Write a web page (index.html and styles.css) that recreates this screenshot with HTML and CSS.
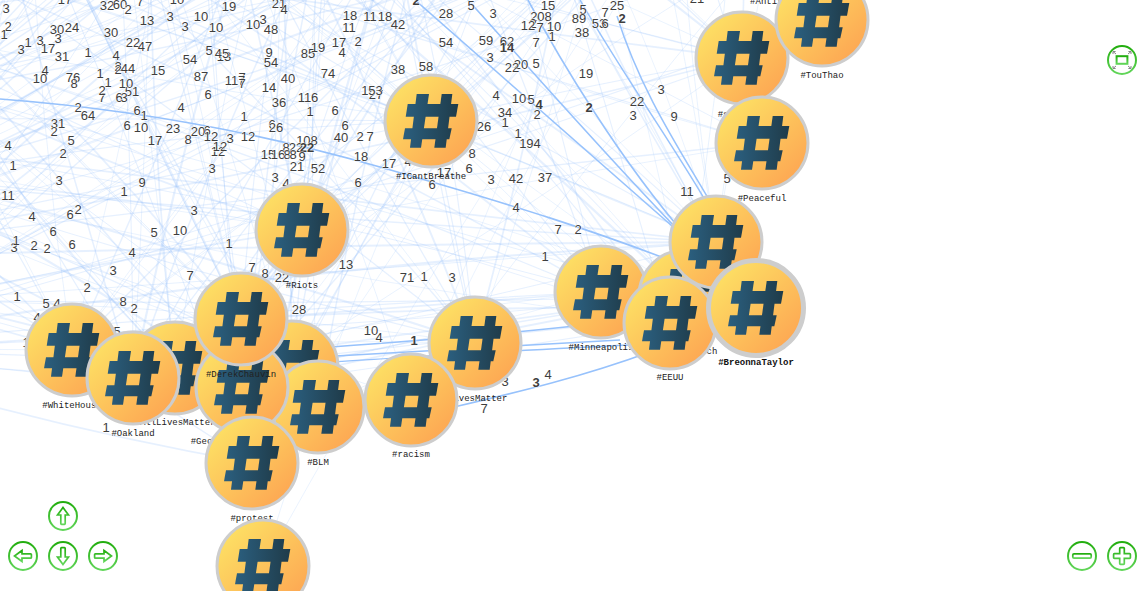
FILE: index.html
```html
<!DOCTYPE html>
<html lang="en">
<head>
<meta charset="utf-8">
<title>Hashtag network</title>
<link rel="stylesheet" href="styles.css">
</head>
<body>
<main class="stage">
  <svg class="graph" id="graph" width="1147" height="591" viewBox="0 0 1147 591" xmlns="http://www.w3.org/2000/svg">
    <defs>
      <linearGradient id="disc" x1="0.12" y1="0.12" x2="0.88" y2="0.88">
        <stop offset="0" stop-color="#fde064"/>
        <stop offset="1" stop-color="#fda753"/>
      </linearGradient>
      <linearGradient id="ink" gradientUnits="userSpaceOnUse" x1="-28" y1="0" x2="28" y2="0">
        <stop offset="0" stop-color="#2b5f7f"/>
        <stop offset="1" stop-color="#1f3b49"/>
      </linearGradient>
      <g id="hash-mark" fill="url(#ink)">
        <path d="M-14.3 -27H-2L-10 26.7H-21Z"/>
        <path d="M10.7 -27H21.3L14.7 26.7H3.3Z"/>
        <path d="M-23.3 -17H27.3L25 -4.3H-25.3Z"/>
        <path d="M-26 7.3H20.7L18.3 18.3H-28Z"/>
      </g>
    </defs>
    <g id="edges"></g>
    <g id="edge-labels"></g>
    <g id="nodes"></g>
  </svg>

  <svg width="0" height="0" class="defs-only" aria-hidden="true">
    <defs>
      <linearGradient id="ctl" x1="0" y1="0" x2="0" y2="1">
        <stop offset="0" stop-color="#22ad0e"/>
        <stop offset="1" stop-color="#62d65a"/>
      </linearGradient>
    </defs>
  </svg>

  <button class="ctl ctl-up" aria-label="Move up">
    <svg viewBox="0 0 30 30"><circle cx="15" cy="15" r="14"/><path d="M15 6.5L20.5 14H17.2V22.6A.8 .8 0 0 1 16.4 23.4H13.6A.8 .8 0 0 1 12.8 22.6V14H9.5Z"/></svg>
  </button>
  <button class="ctl ctl-left" aria-label="Move left">
    <svg viewBox="0 0 30 30"><circle cx="15" cy="15" r="14"/><path d="M6.5 15L14 9.5V12.8H22.6A.8 .8 0 0 1 23.4 13.6V16.4A.8 .8 0 0 1 22.6 17.2H14V20.5Z"/></svg>
  </button>
  <button class="ctl ctl-down" aria-label="Move down">
    <svg viewBox="0 0 30 30"><circle cx="15" cy="15" r="14"/><path d="M15 23.5L20.5 16H17.2V7.4A.8 .8 0 0 0 16.4 6.6H13.6A.8 .8 0 0 0 12.8 7.4V16H9.5Z"/></svg>
  </button>
  <button class="ctl ctl-right" aria-label="Move right">
    <svg viewBox="0 0 30 30"><circle cx="15" cy="15" r="14"/><path d="M23.5 15L16 9.5V12.8H7.4A.8 .8 0 0 0 6.6 13.6V16.4A.8 .8 0 0 0 7.4 17.2H16V20.5Z"/></svg>
  </button>
  <button class="ctl ctl-minus" aria-label="Zoom out">
    <svg viewBox="0 0 30 30"><circle cx="15" cy="15" r="14"/><rect x="5.8" y="12.8" width="18.4" height="4.4" rx="1.2"/></svg>
  </button>
  <button class="ctl ctl-plus" aria-label="Zoom in">
    <svg viewBox="0 0 30 30"><circle cx="15" cy="15" r="14"/><path d="M12.7 7.4A.8 .8 0 0 1 13.5 6.6H16.5A.8 .8 0 0 1 17.3 7.4V12.7H22.6A.8 .8 0 0 1 23.4 13.5V16.5A.8 .8 0 0 1 22.6 17.3H17.3V22.6A.8 .8 0 0 1 16.5 23.4H13.5A.8 .8 0 0 1 12.7 22.6V17.3H7.4A.8 .8 0 0 1 6.6 16.5V13.5A.8 .8 0 0 1 7.4 12.7H12.7Z"/></svg>
  </button>
  <button class="ctl ctl-fit" aria-label="Fit to screen">
    <svg viewBox="0 0 30 30"><circle cx="15" cy="15" r="14"/><rect class="frame" x="9.6" y="11.2" width="10.8" height="7.6"/><path class="corner" d="M6 6.5L9 9M6 6.5H8.6M6 6.5V9M24 6.5L21 9M24 6.5H21.4M24 6.5V9M6 23.5L9 21M6 23.5H8.6M6 23.5V21M24 23.5L21 21M24 23.5H21.4M24 23.5V21"/></svg>
  </button>
</main>
<script src="graph.js"></script>
</body>
</html>
```

FILE: styles.css
```css
html, body {
  margin: 0;
  padding: 0;
  background: #fff;
  overflow: hidden;
}

.stage {
  position: relative;
  width: 1147px;
  height: 591px;
  overflow: hidden;
}

.graph {
  display: block;
}

.defs-only {
  position: absolute;
}

.edge {
  fill: none;
  stroke: #97c2fc;
  stroke-opacity: 0.24;
}

.edge-strong {
  fill: none;
  stroke: #97c2fc;
  stroke-opacity: 1;
}

.edge-label {
  font-family: "Liberation Sans", Arial, sans-serif;
  font-size: 13px;
  fill: #3e3e3e;
  text-anchor: middle;
  dominant-baseline: central;
  paint-order: stroke;
  stroke: #fff;
  stroke-width: 1px;
}

.edge-label-bold {
  font-weight: bold;
}

.node-ring {
  stroke: #cdcdcd;
  stroke-width: 3;
}

.node-ring-selected {
  stroke-width: 5;
}

.node-label {
  font-family: "Liberation Mono", "Courier New", monospace;
  font-size: 9px;
  fill: #222;
  text-anchor: middle;
  dominant-baseline: central;
}

.node-label-selected {
  font-weight: bold;
  fill: #111;
}

.ctl {
  position: absolute;
  width: 30px;
  height: 30px;
  padding: 0;
  border: 0;
  background: none;
}

.ctl svg {
  display: block;
  width: 30px;
  height: 30px;
  fill: #fff;
  stroke: url(#ctl);
  stroke-width: 1.7;
}

.ctl circle {
  stroke-width: 2;
}

.ctl .frame {
  stroke-width: 2;
}

.ctl .corner {
  fill: none;
  stroke: #858585;
  stroke-width: 1;
}

.ctl-up { left: 48px; top: 501px; }
.ctl-left { left: 8px; top: 541px; }
.ctl-down { left: 48px; top: 541px; }
.ctl-right { left: 88px; top: 541px; }
.ctl-minus { left: 1067px; top: 541px; }
.ctl-plus { left: 1107px; top: 541px; }
.ctl-fit { left: 1107px; top: 45px; }
```

FILE: graph.js
```js
(function () {
  var NS = "http://www.w3.org/2000/svg";

  // Drawn in this order: later nodes lie over earlier ones. [name, x, y, label y, weight]
  var NODES = [
    ["#Antifa", 769, -54, 2, 0.4],
    ["#shooting", 742, 58, 115, 0.5],
    ["#TouThao", 822, 20, 76, 0.12],
    ["#Peaceful", 762, 143, 199, 0.35],
    ["#ICantBreathe", 431, 121, 177, 0.8],
    ["#Riots", 302, 230, 286, 0.7],
    ["#Looters", 292, 367, 423, 0.6],
    ["#BLM", 318, 407, 463, 0.35],
    ["#AllLivesMatter", 175, 368, 423, 0.6],
    ["#WhiteHouse", 72, 350, 406, 0.6],
    ["#Oakland", 133, 378, 434, 0.5],
    ["#GeorgeFloydProtest", 242, 387, 442, 0.6],
    ["#DerekChauvin", 241, 319, 375, 0.7],
    ["#protest", 252, 463, 519, 0.3],
    ["#NYC", 263, 566, 622, 0.09],
    ["#LivesMatter", 475, 343, 399, 0.6],
    ["#racism", 411, 400, 455, 0.28],
    ["#Minneapolis", 601, 292, 348, 0.6],
    ["#PoliceWatch", 685, 296, 352, 0.5],
    ["#Protests", 716, 242, 298, 0.6],
    ["#EEUU", 670, 323, 378, 0.3],
    ["#BreonnaTaylor", 756, 308, 363, 0.25]
  ];

  // Nodes of the same network that lie outside the window.
  var OUTSIDE = [
    [-200, -150], [-60, -300], [30, -120], [90, -400], [150, -90], [200, -250], [280, -130],
    [340, -350], [400, -90], [470, -220], [540, -120], [610, -300], [680, -110], [740, -240],
    [-150, 20], [-300, 120], [-100, 180], [-250, 260], [-80, 300], [-200, 350], [-60, 90],
    [-120, -60], [110, -200], [320, -70], [600, -60]
  ];

  // Edges with a heavier line.
  var STRONG = [
    ["M0 99C120 108 250 130 380 167S600 232 700 272", 1.6],
    ["M415 0L672 226", 1.6],
    ["M468 0C540 80 610 160 678 230", 1.6],
    ["M528 0C560 60 620 160 686 236", 1.6],
    ["M580 0C620 70 670 140 705 200", 1.5],
    ["M617 16C640 90 680 150 708 198", 1.5],
    ["M290 350C400 342 500 335 610 322", 1.4],
    ["M300 358C420 352 520 346 620 340", 1.4],
    ["M330 362C430 356 520 350 630 345", 1.4],
    ["M400 420C480 400 560 385 650 352", 1.6]
  ];

  // Edge labels: [text, x, y, bold]
  var LABELS = [
    ["3",6,8],["32",107,5],["60",120,4],["2",128,9],["7",140,1],["17",65,-1],["10",177,-1],["13",147,20],
    ["3",170,16],["10",201,16],["19",229,6],["21",279,3],["4",284,9],["18",350,15],["11",370,16],["18",385,16],
    ["42",398,24],["3",185,26],["10",216,27],["10",253,24],["3",263,19],["48",271,29],["11",349,27],
    ["2",8,26],["1",4,34],["30",57,29],["24",72,27],["3",58,38],["30",111,32],["22",133,42],["47",145,46],
    ["3",40,40],["1",28,42],["3",21,49],["17",48,48],["31",62,56],["1",88,52],["4",116,55],["5",209,50],
    ["13",224,56],["45",222,53],["54",190,59],["9",269,52],["54",271,62],["85",308,53],["19",318,47],
    ["17",339,42],["2",358,41],["4",342,52],["4",45,70],["10",40,78],["76",73,77],["8",74,83],["2",118,66],
    ["2",118,69],["44",128,68],["15",158,70],["1",100,73],["1",108,82],["51",132,91],["10",126,83],
    ["6",119,97],["3",124,97],["7",102,97],["2",102,90],["87",201,76],["7",242,77],["117",235,80],["7",242,83],
    ["14",269,87],["40",288,78],["74",328,73],["6",208,94],["36",279,102],["116",308,97],["1",310,111],
    ["6",335,110],["27",376,94],["153",372,90],["2",78,107],["64",88,115],["4",181,107],["6",137,110],
    ["1",144,115],["1",244,116],["31",58,123],["2",54,131],["6",127,125],["10",141,127],["23",173,128],
    ["6",207,130],["20",198,131],["6",272,124],["26",276,127],["6",345,125],["40",341,137],["2",360,136],
    ["7",370,136],["5",71,140],["17",155,140],["8",188,139],["12",211,136],["3",230,138],["12",248,136],
    ["4",8,145],["2",63,153],["12",218,151],["12",220,146],["108",307,140],["8",286,147],["22",296,147],
    ["22",307,147,1],["15",268,154],["16",278,154],["8",287,154],["8",293,154],["9",302,156],["18",361,156],
    ["1",13,165],["3",212,168],["21",297,166],["52",318,168],["3",59,180],["3",275,177],["4",286,183],
    ["9",142,182],["1",124,191],["6",358,182],["11",8,195],["3",194,210],["4",32,216],["6",70,214],["2",78,209],
    ["6",53,231],["5",154,232],["10",180,230],["1",229,243],["3",14,247],["1",16,240],["2",34,245],["2",47,248],
    ["6",72,244],["4",132,252],["3",113,270],["7",190,275],["7",252,267],["8",265,273],["22",282,277],
    ["13",346,264],["2",87,287],["1",17,296],["5",46,303],["4",57,303],["8",123,301],["2",134,308],["28",299,309],
    ["4",37,317],["5",117,331],["1",26,342],["1",106,427],["10",371,330],["4",379,337],
    ["2",416,0,1],["5",471,5],["3",493,13],["15",548,5],["5",583,9],["7",605,12],["25",617,5],["28",446,13],
    ["208",541,16],["7",540,27],["2",533,23],["12",528,25],["10",554,26],["89",579,18],["53",599,23],["6",605,23],
    ["2",622,18,1],["38",582,32],["1",552,36],["54",446,42],["59",486,40],["62",507,41],["14",507,47,1],
    ["7",536,42],["3",490,57],["20",521,64],["22",512,67],["5",536,63],["19",586,73],["38",398,69],["58",426,66],
    ["3",661,89],["22",637,101],["4",496,95],["10",519,98],["5",531,99],["4",539,104,1],["2",537,114],["2",589,107,1],
    ["34",505,112],["1",505,122],["3",633,115],["9",674,116],["26",484,126],["1",518,133],["194",530,143],
    ["8",472,153],["17",389,163],["4",408,161],["17",444,172],["6",469,168],["3",491,179],["42",516,178],["37",545,177],
    ["6",432,184],["4",516,207],["7",558,229],["2",578,229],["11",687,191],["5",727,178],["21",697,-2],
    ["1",545,256],["71",407,277],["1",424,276],["3",452,277],["4",548,374],["3",536,382,1],["7",484,408],
    ["1",414,340,1],["3",505,381]
  ];

  function make(tag, attrs, parent, cls) {
    var el = document.createElementNS(NS, tag);
    Object.keys(attrs).forEach(function (k) { el.setAttribute(k, attrs[k]); });
    if (cls) el.setAttribute("class", cls);
    parent.appendChild(el);
    return el;
  }

  var seed = 20200601;
  function rnd() {
    seed = (seed + 0x6d2b79f5) | 0;
    var t = Math.imul(seed ^ (seed >>> 15), 1 | seed);
    t = (t + Math.imul(t ^ (t >>> 7), 61 | t)) ^ t;
    return ((t ^ (t >>> 14)) >>> 0) / 4294967296;
  }

  var ends = NODES.map(function (n) { return { x: n[1], y: n[2], w: n[4] }; })
    .concat(OUTSIDE.map(function (p) { return { x: p[0], y: p[1], w: 0.8 }; }));

  var edges = document.getElementById("edges");
  for (var a = 0; a < ends.length; a++) {
    for (var b = a + 1; b < ends.length; b++) {
      if (rnd() > ends[a].w * ends[b].w * 0.95) continue;
      var A = ends[a], B = ends[b];
      var bend = (rnd() - 0.5) * 0.08;
      var cx = (A.x + B.x) / 2 - (B.y - A.y) * bend;
      var cy = (A.y + B.y) / 2 + (B.x - A.x) * bend;
      make("path", {
        d: "M" + A.x + " " + A.y + "Q" + cx.toFixed(1) + " " + cy.toFixed(1) + " " + B.x + " " + B.y,
        "stroke-width": (0.8 + rnd() * rnd() * 1.6).toFixed(2)
      }, edges, "edge");
    }
  }

  STRONG.forEach(function (s) {
    make("path", { d: s[0], "stroke-width": s[1] }, edges, "edge-strong");
  });

  var labels = document.getElementById("edge-labels");
  LABELS.forEach(function (l) {
    var t = make("text", { x: l[1], y: l[2] }, labels, "edge-label" + (l[3] ? " edge-label-bold" : ""));
    t.textContent = l[0];
  });

  var nodes = document.getElementById("nodes");
  NODES.forEach(function (n) {
    var selected = n[0] === "#BreonnaTaylor";
    var g = make("g", { transform: "translate(" + n[1] + " " + n[2] + ")" }, nodes);
    make("circle", { r: selected ? 47.5 : 46, fill: "url(#disc)" }, g, "node-ring" + (selected ? " node-ring-selected" : ""));
    make("use", { href: "#hash-mark" }, g);
    var t = make("text", { x: 0, y: n[3] - n[2] }, g, "node-label" + (selected ? " node-label-selected" : ""));
    t.textContent = n[0];
  });
})();
```
